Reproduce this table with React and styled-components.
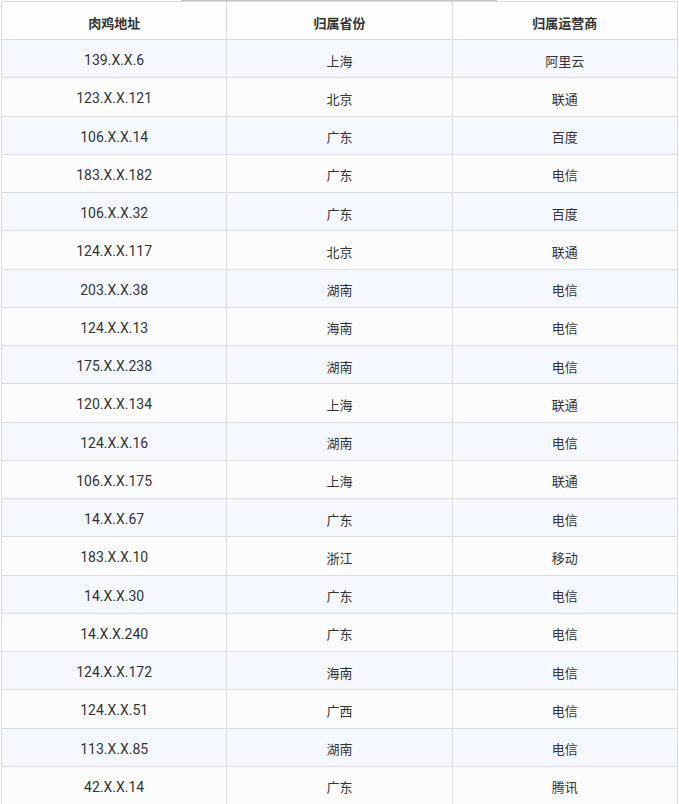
import styled, { createGlobalStyle } from "styled-components";

const GlobalStyle = createGlobalStyle`
  html, body {
    margin: 0;
    padding: 0;
    background: #ffffff;
  }
  body {
    font-family: "Microsoft YaHei", "Roboto", "Noto Sans CJK SC", sans-serif;
  }
`;

const Page = styled.div`
  width: 679px;
  display: flex;
  flex-direction: column;
`;

const ScrollTrack = styled.div`
  height: 1px;
  display: flex;
`;

const ScrollThumb = styled.div`
  width: 316px;
  margin-left: 181px;
  background: #c4c4c4;
`;

const TableWrap = styled.div`
  padding: 0 1px;
`;

const Table = styled.table`
  width: 677px;
  border-collapse: collapse;
  table-layout: fixed;
  font-size: 13px;
  color: #333333;
`;

const HeadCell = styled.th`
  box-sizing: border-box;
  height: 38px;
  padding: 3px 0 0;
  border: 1px solid #dcdcdc;
  background: #fdfdfd;
  font-weight: 700;
  text-align: center;
`;

const Row = styled.tr`
  background: ${(p) => (p.$striped ? "#f5f9ff" : "#fcfcfc")};
`;

const Cell = styled.td`
  box-sizing: border-box;
  height: 38.25px;
  padding: 3px 0 0;
  border: 1px solid #dcdcdc;
  text-align: center;
  font-size: ${(p) => (p.$ip ? "14px" : "13px")};
`;

const rows = [
  ["139.X.X.6", "上海", "阿里云"],
  ["123.X.X.121", "北京", "联通"],
  ["106.X.X.14", "广东", "百度"],
  ["183.X.X.182", "广东", "电信"],
  ["106.X.X.32", "广东", "百度"],
  ["124.X.X.117", "北京", "联通"],
  ["203.X.X.38", "湖南", "电信"],
  ["124.X.X.13", "海南", "电信"],
  ["175.X.X.238", "湖南", "电信"],
  ["120.X.X.134", "上海", "联通"],
  ["124.X.X.16", "湖南", "电信"],
  ["106.X.X.175", "上海", "联通"],
  ["14.X.X.67", "广东", "电信"],
  ["183.X.X.10", "浙江", "移动"],
  ["14.X.X.30", "广东", "电信"],
  ["14.X.X.240", "广东", "电信"],
  ["124.X.X.172", "海南", "电信"],
  ["124.X.X.51", "广西", "电信"],
  ["113.X.X.85", "湖南", "电信"],
  ["42.X.X.14", "广东", "腾讯"],
];

export default function App() {
  return (
    <>
      <GlobalStyle />
      <Page>
        <ScrollTrack>
          <ScrollThumb />
        </ScrollTrack>
        <TableWrap>
          <Table>
            <thead>
              <tr>
                <HeadCell>肉鸡地址</HeadCell>
                <HeadCell>归属省份</HeadCell>
                <HeadCell>归属运营商</HeadCell>
              </tr>
            </thead>
            <tbody>
              {rows.map((r, i) => (
                <Row key={i} $striped={i % 2 === 0}>
                  <Cell $ip>{r[0]}</Cell>
                  <Cell>{r[1]}</Cell>
                  <Cell>{r[2]}</Cell>
                </Row>
              ))}
            </tbody>
          </Table>
        </TableWrap>
      </Page>
    </>
  );
}
